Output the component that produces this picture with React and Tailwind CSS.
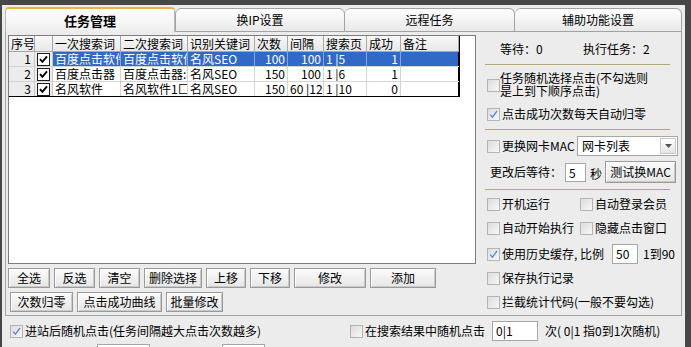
function Box({ on, list }) {
  if (list) {
    return (
      <span className="w-[13px] h-[13px] border border-[#1c1c1c] bg-white flex items-center justify-center shrink-0">
        {on && (
          <svg width="9" height="9" viewBox="0 0 9 9">
            <path d="M1 4.2 L3.4 6.8 L8 1.4" fill="none" stroke="#000" strokeWidth="1.9" />
          </svg>
        )}
      </span>
    )
  }
  return (
    <span className="w-[13px] h-[13px] border border-[#b4b4b4] bg-gradient-to-br from-[#dcdcdc] to-[#f8f8f8] flex items-center justify-center shrink-0">
      {on && (
        <svg width="9" height="9" viewBox="0 0 9 9">
          <path d="M1.2 4.6 L3.4 7.2 L8 1" fill="none" stroke="#5b86d8" strokeWidth="1.3" />
        </svg>
      )}
    </span>
  )
}

function Btn({ className, children }) {
  return (
    <div
      className={
        'h-[20px] flex items-center justify-center border border-[#9a9a9a] bg-gradient-to-b from-[#fbfbfb] to-[#e6e6e6] shadow-[inset_1px_1px_0_#ffffff,inset_-1px_-1px_0_#c9c9c9] whitespace-nowrap ' +
        className
      }
    >
      {children}
    </div>
  )
}

function Opt({ on, children, className }) {
  return (
    <div className={'flex items-center gap-[2px] whitespace-nowrap ' + (className || '')}>
      <Box on={on} />
      <span>{children}</span>
    </div>
  )
}

const cols = [26, 18, 68, 67, 67, 33, 36, 43, 34, 58]
const heads = ['序号', '', '一次搜索词', '二次搜索词', '识别关键词', '次数', '间隔', '搜索页', '成功', '备注']
const rows = [
  ['1', true, '百度点击软件', '百度点击软件:', '名风SEO', '100', '100', '1 |5', '1', ''],
  ['2', true, '百度点击器', '百度点击器:软', '名风SEO', '150', '100', '1 |6', '1', ''],
  ['3', true, '名风软件', '名风软件1匚', '名风SEO', '150', '60 |120', '1 |10', '0', ''],
]
const rightCols = [5, 6, 8]

function ListRow({ r, sel, last }) {
  return (
    <div className={'flex h-[15px] leading-[14px] ' + (last ? 'border-b border-black' : 'border-b border-[#d4d4d4]')}>
      <div className="w-[26px] shrink-0 bg-[#ececec] border-r border-[#c8c8c8] text-right pr-[3px]">{r[0]}</div>
      <div className="w-[18px] shrink-0 bg-[#ececec] border-r border-[#c8c8c8] flex items-center justify-center">
        <Box on={r[1]} list />
      </div>
      {r.slice(2).map((t, i) => {
        const ci = i + 2
        const right = rightCols.includes(ci) && !(ci === 6 && t.length > 4)
        return (
          <div
            key={ci}
            style={{ width: cols[ci] }}
            className={
              'shrink-0 overflow-hidden whitespace-nowrap px-[2px] ' +
              (right ? 'text-right ' : '') +
              (sel ? 'bg-[#3169c6] text-white border-r border-[#86a6dc]' : 'border-r border-[#d4d4d4]') +
              (ci === 9 ? ' border-r-black' : '')
            }
          >
            {t}
          </div>
        )
      })}
    </div>
  )
}

export default function App() {
  return (
    <div className="w-[691px] h-[347px] overflow-hidden bg-[#474747] pt-[5px] pl-[2px] pr-[6px] font-['Noto_Sans_CJK_SC',sans-serif] text-[12px] leading-[14px] text-black">
      <div className="h-[342px] bg-[#ececec] flex flex-col">
        {/* tabs */}
        <div className="h-[27px] pl-[3px] flex items-end shrink-0">
          <div className="w-[170px] h-[25px] border-t-2 border-x border-t-[#f0b23a] border-x-[#b8b8b8] rounded-t-[4px] bg-gradient-to-b from-white to-[#eeeeee] flex items-center justify-center font-bold text-[13px]">
            任务管理
          </div>
          <div className="w-[170px] h-[24px] border border-[#a2a2a2] rounded-t-[6px] bg-gradient-to-b from-white to-[#e9e9e9] flex items-center justify-center">
            换IP设置
          </div>
          <div className="w-[170px] h-[24px] border border-l-0 border-[#a2a2a2] rounded-t-[6px] bg-gradient-to-b from-white to-[#e9e9e9] flex items-center justify-center">
            远程任务
          </div>
          <div className="w-[167px] h-[24px] border border-l-0 border-[#a2a2a2] rounded-t-[6px] bg-gradient-to-b from-white to-[#e9e9e9] flex items-center justify-center">
            辅助功能设置
          </div>
        </div>

        {/* tab page */}
        <div className="mx-[3px] h-[284px] shrink-0 border-x border-b border-[#a2a2a2] flex">
          <div className="w-[472px] pl-[2px] pt-[3px] flex flex-col shrink-0">
            <div className="w-[468px] h-[229px] border border-[#7c7c7c] bg-white overflow-hidden">
              <div className="w-[451px] border-r border-black">
                <div className="flex h-[16px] leading-[15px] border-b border-[#a8a8a8] bg-gradient-to-b from-[#f8f8f8] to-[#e8e8e8]">
                  {heads.map((h, i) => (
                    <div
                      key={i}
                      style={{ width: cols[i] }}
                      className="shrink-0 overflow-hidden whitespace-nowrap pl-[2px] border-r border-[#a8a8a8]"
                    >
                      {h}
                    </div>
                  ))}
                </div>
                {rows.map((r, i) => (
                  <ListRow key={i} r={r} sel={i === 0} last={i === 2} />
                ))}
              </div>
            </div>
            <div className="flex gap-[4px] mt-[4px]">
              <Btn className="w-[42px]">全选</Btn>
              <Btn className="w-[41px]">反选</Btn>
              <Btn className="w-[41px]">清空</Btn>
              <Btn className="w-[58px]">删除选择</Btn>
              <Btn className="w-[40px]">上移</Btn>
              <Btn className="w-[40px]">下移</Btn>
              <Btn className="w-[72px]">修改</Btn>
              <Btn className="w-[66px]">添加</Btn>
            </div>
            <div className="flex gap-[4px] mt-[4px] ml-[2px]">
              <Btn className="w-[63px]">次数归零</Btn>
              <Btn className="w-[85px]">点击成功曲线</Btn>
              <Btn className="w-[57px]">批量修改</Btn>
            </div>
          </div>

          {/* right panel */}
          <div className="flex-1 flex flex-col pl-[9px]">
            <div className="flex mt-[9px] h-[16px] items-center pl-[13px]">
              <span className="w-[83px]">等待：0</span>
              <span>执行任务：2</span>
            </div>
            <div className="mt-[7px] ml-[-2px] w-[185px] h-px bg-[#b3a777]" />
            <div className="mt-[6px] flex items-start">
              <span className="mt-[8px]">
                <Box />
              </span>
              <span className="leading-[13px]">
                任务随机选择点击(不勾选则
                <br />
                是上到下顺序点击)
              </span>
            </div>
            <Opt on className="mt-[9px] h-[16px]">点击成功次数每天自动归零</Opt>
            <div className="mt-[7px] ml-[-2px] w-[185px] h-px bg-[#b3a777]" />
            <div className="mt-[6px] flex items-center h-[20px]">
              <Opt className="w-[90px]">更换网卡MAC</Opt>
              <div className="w-[101px] h-[20px] border border-[#a6a6a6] bg-white flex items-center justify-between pl-[4px] pr-[1px]">
                <span>网卡列表</span>
                <span className="w-[16px] h-[16px] border border-[#c8c8c8] bg-gradient-to-b from-white to-[#e4e4e4] flex items-center justify-center">
                  <svg width="7" height="4" viewBox="0 0 7 4">
                    <path d="M0 0 H7 L3.5 4 Z" fill="#555" />
                  </svg>
                </span>
              </div>
            </div>
            <div className="mt-[5px] flex items-center h-[22px] pl-[3px]">
              <span className="w-[75px]">更改后等待：</span>
              <div className="w-[21px] h-[19px] border border-[#a6a6a6] bg-white pl-[3px] leading-[17px]">5</div>
              <span className="ml-[4px] mt-[3px]">秒</span>
              <Btn className="ml-[3px] w-[71px] h-[22px]">测试换MAC</Btn>
            </div>
            <div className="mt-[6px] ml-[-2px] w-[185px] h-px bg-[#b3a777]" />
            <div className="mt-[4px] flex items-center h-[20px]">
              <Opt className="w-[93px]">开机运行</Opt>
              <Opt>自动登录会员</Opt>
            </div>
            <div className="mt-[4px] flex items-center h-[20px]">
              <Opt className="w-[93px]">自动开始执行</Opt>
              <Opt>隐藏点击窗口</Opt>
            </div>
            <div className="mt-[6px] flex items-center h-[20px]">
              <Opt on className="w-[125px]">使用历史缓存, 比例</Opt>
              <div className="w-[26px] h-[20px] border border-[#a6a6a6] bg-white pl-[3px] leading-[18px]">50</div>
              <span className="ml-[5px]">1到90</span>
            </div>
            <Opt className="mt-[4px] h-[20px]">保存执行记录</Opt>
            <Opt className="mt-[4px] h-[20px]">拦截统计代码(一般不要勾选)</Opt>
          </div>
        </div>

        {/* bottom */}
        <div className="mt-[5px] flex items-center h-[20px] pl-[8px]">
          <Opt on className="w-[340px]">进站后随机点击(任务间隔越大点击次数越多)</Opt>
          <Opt className="w-[142px]">在搜索结果中随机点击</Opt>
          <div className="w-[46px] h-[20px] border border-[#a6a6a6] bg-white pl-[3px] leading-[18px]">0|1</div>
          <span className="ml-[7px]">次( 0|1 指0到1次随机)</span>
        </div>
        <div className="mt-[3px] flex pl-[95px]">
          <div className="w-[53px] h-[10px] border border-[#a6a6a6] bg-white" />
          <div className="ml-[72px] w-[43px] h-[10px] border border-[#a6a6a6] bg-white" />
        </div>
      </div>
    </div>
  )
}
